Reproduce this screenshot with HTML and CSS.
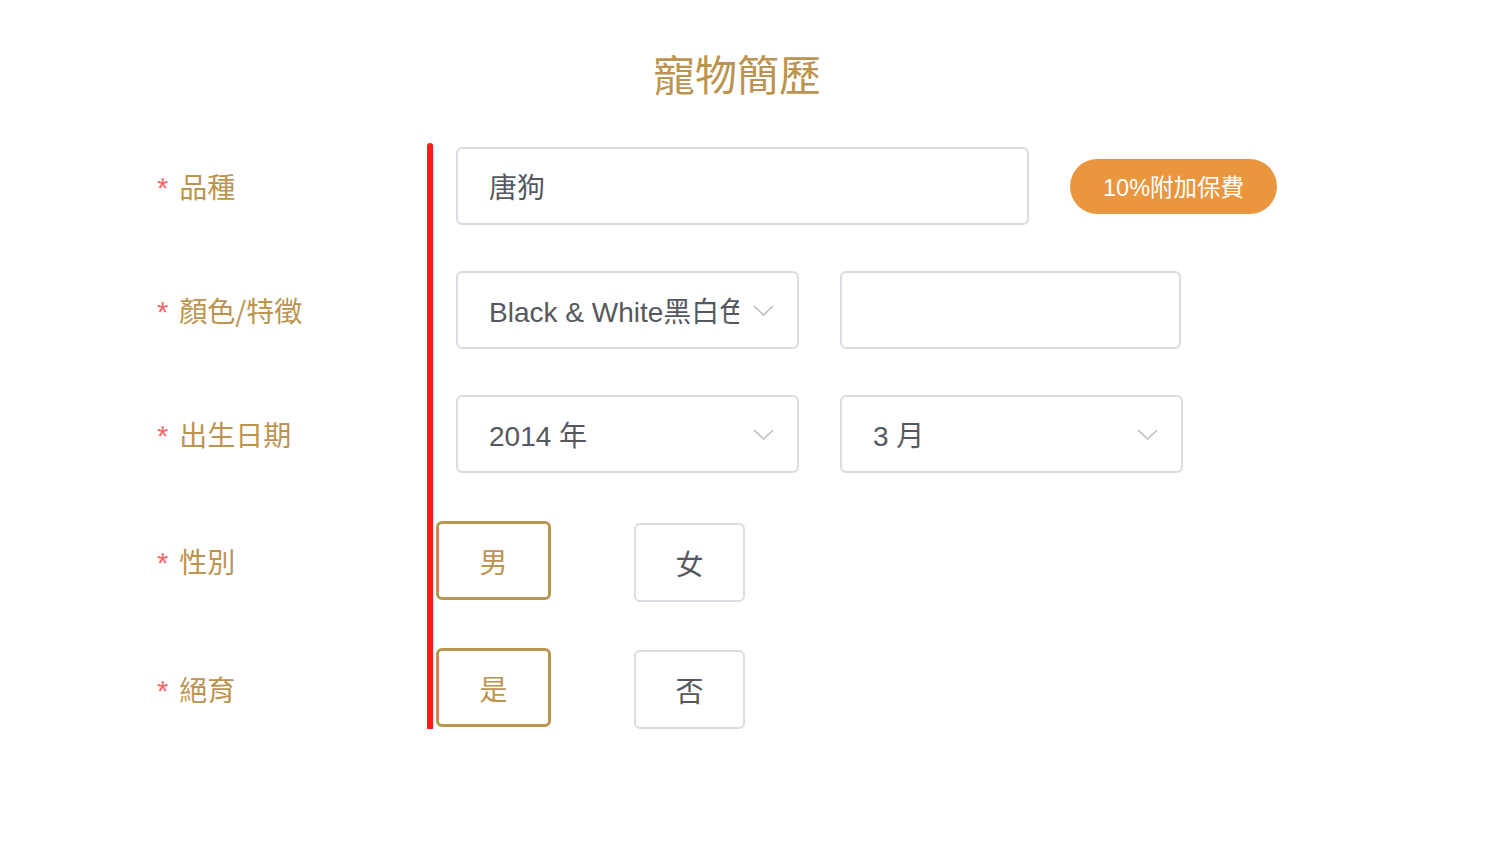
FILE: index.html
```html
<!DOCTYPE html>
<html>
<head>
  <meta charset="utf-8">
  <title>寵物簡歷</title>
  <link rel="stylesheet" href="styles.css">
</head>
<body>
  <div class="page">
    <h1 class="title">寵物簡歷</h1>

    <form class="pet-form">
      <div class="divider"></div>

      <!-- 品種 -->
      <label class="field-label row-1"><span class="required">*</span>品種</label>
      <div class="field row-1">
        <div class="text-box breed">唐狗</div>
        <button type="button" class="pill-btn">10%附加保費</button>
      </div>

      <!-- 顏色/特徵 -->
      <label class="field-label row-2"><span class="required">*</span>顏色/特徵</label>
      <div class="field row-2">
        <div class="select-box">
          <span class="select-text">Black &amp; White黑白色</span>
          <svg class="chevron" width="21" height="11" viewBox="0 0 21 11"><path d="M1 1 L10.5 10 L20 1" fill="none" stroke="#b7bbc4" stroke-width="1.5"/></svg>
        </div>
        <div class="text-box narrow"></div>
      </div>

      <!-- 出生日期 -->
      <label class="field-label row-3"><span class="required">*</span>出生日期</label>
      <div class="field row-3">
        <div class="select-box">
          <span class="select-text">2014 年</span>
          <svg class="chevron" width="21" height="11" viewBox="0 0 21 11"><path d="M1 1 L10.5 10 L20 1" fill="none" stroke="#b7bbc4" stroke-width="1.5"/></svg>
        </div>
        <div class="select-box narrow">
          <span class="select-text">3 月</span>
          <svg class="chevron" width="21" height="11" viewBox="0 0 21 11"><path d="M1 1 L10.5 10 L20 1" fill="none" stroke="#b7bbc4" stroke-width="1.5"/></svg>
        </div>
      </div>

      <!-- 性別 -->
      <label class="field-label row-4"><span class="required">*</span>性別</label>
      <div class="field choice-row row-4">
        <button type="button" class="choice active">男</button>
        <button type="button" class="choice">女</button>
      </div>

      <!-- 絕育 -->
      <label class="field-label row-5"><span class="required">*</span>絕育</label>
      <div class="field choice-row row-5">
        <button type="button" class="choice active">是</button>
        <button type="button" class="choice">否</button>
      </div>
    </form>
  </div>
</body>
</html>
```

FILE: styles.css
```css
body {
  margin: 0;
  padding: 0;
  background-color: #fff;
  font-family: "Liberation Sans", "Noto Sans CJK TC", sans-serif;
  color: #55585e;
}

.page {
  padding-top: 52px;
}

.title {
  margin: 0 0 53px;
  padding-right: 20px;
  text-align: center;
  font-family: "Noto Sans CJK TC", sans-serif;
  font-size: 42px;
  font-weight: normal;
  line-height: 1;
  color: #bb9450;
}

.pet-form {
  display: grid;
  grid-template-columns: 270px 6px 1fr;
  grid-template-rows: repeat(5, auto);
  row-gap: 46px;
  margin-left: 157px;
}

.divider {
  grid-column: 2;
  grid-row: 1 / -1;
  margin: -4px 0 -6px;
  border-radius: 3px;
  background-color: #ff1a1a;
}

.row-1 { grid-row: 1; }
.row-2 { grid-row: 2; }
.row-3 { grid-row: 3; }
.row-4 { grid-row: 4; }
.row-5 { grid-row: 5; }

.field-label {
  grid-column: 1;
  align-self: center;
  font-family: "Noto Sans CJK TC", sans-serif;
  font-size: 28px;
  color: #bb9450;
}

.required {
  margin-right: 11px;
  font-family: "Liberation Sans", sans-serif;
  font-size: 29px;
  color: #f4686c;
}

.field {
  grid-column: 3;
  display: flex;
  align-items: center;
  padding-left: 3px;
}

.text-box,
.select-box {
  box-sizing: border-box;
  height: 78px;
  margin-left: 20px;
  border: 2px solid #d8dce3;
  border-radius: 6px;
  font-size: 28px;
}

.text-box {
  display: flex;
  align-items: center;
  padding-left: 31px;
}

.breed {
  width: 573px;
}

.narrow {
  width: 341px;
  margin-left: 41px;
}

.select-box {
  display: flex;
  align-items: center;
  width: 343px;
  padding: 0 23px 0 31px;
}

.select-text {
  flex: 1;
  overflow: hidden;
  white-space: nowrap;
}

.chevron {
  flex: none;
  margin-left: 14px;
}

.pill-btn {
  height: 55px;
  margin-left: 41px;
  padding: 0 33px;
  border: none;
  border-radius: 28px;
  background-color: #ea963f;
  color: #fff;
  font-family: "Liberation Sans", "Noto Sans CJK TC", sans-serif;
  font-size: 23.5px;
  cursor: pointer;
}

.choice-row {
  align-items: flex-start;
  margin-top: 2px;
}

.row-5 {
  margin-top: 0;
}

.choice {
  box-sizing: border-box;
  width: 111px;
  height: 79px;
  margin-top: 2px;
  margin-left: 83px;
  border: 2px solid #d8dce3;
  border-radius: 6px;
  background-color: #fff;
  color: #55585e;
  font-family: "Noto Sans CJK TC", sans-serif;
  font-size: 28px;
  cursor: pointer;
}

.choice.active {
  width: 115px;
  margin-top: 0;
  margin-left: 0;
  border: 3px solid #bb9450;
  color: #bb9450;
}
```
